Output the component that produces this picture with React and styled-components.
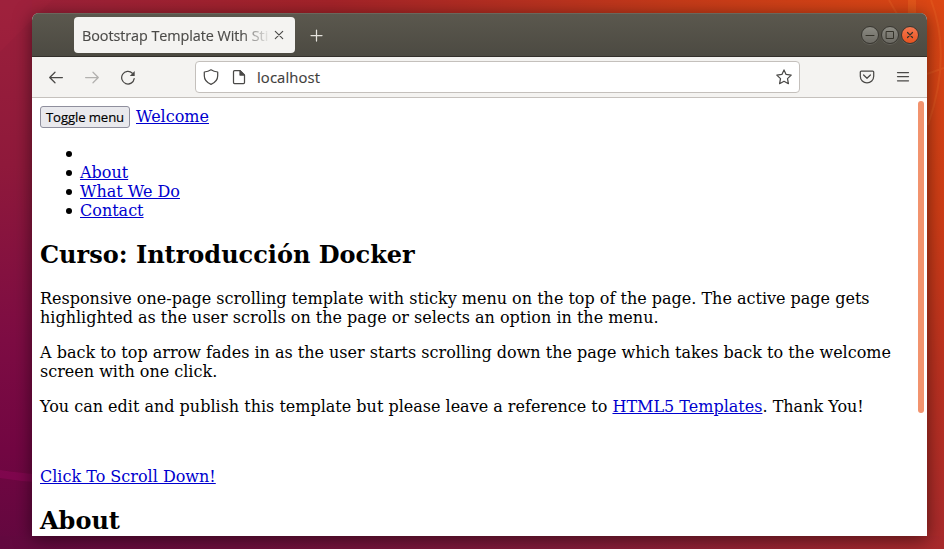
import React from 'react';
import styled, { createGlobalStyle } from 'styled-components';

const GlobalStyle = createGlobalStyle`
  * { box-sizing: border-box; }
  body { margin: 0; overflow: hidden; }
`;

const Desktop = styled.main`
  position: relative;
  width: 944px;
  height: 549px;
  padding: 13px 17px 13px 32px;
  overflow: hidden;
  background:
    linear-gradient(90deg, #62083f 0%, #6d0f3d 25%, #831c3a 60%, #a92a2c 100%) 0 100% / 100% 13px no-repeat,
    linear-gradient(180deg, #9b203b 0%, #8f193b 30%, #7d0c43 62%, #720642 82%, #62083f 100%) 0 0 / 32px 100% no-repeat,
    linear-gradient(180deg, #dc4714 0%, #ce3d16 38%, #b93021 70%, #a92a2c 100%) 100% 0 / 17px 100% no-repeat,
    linear-gradient(90deg, #9b203b 0%, #a42329 35%, #c63b19 72%, #dc4714 100%);
`;

const Wallpaper = styled.svg`
  position: absolute;
  inset: 0;
`;

const Window = styled.section`
  position: relative;
  display: flex;
  flex-direction: column;
  width: 895px;
  height: 523px;
  border-radius: 7px 7px 0 0;
  background: #fff;
  box-shadow: 0 3px 18px rgba(0, 0, 0, 0.52);
  overflow: hidden;
`;

const TitleBar = styled.header`
  display: flex;
  align-items: center;
  flex: 0 0 44px;
  padding: 0 8px 0 42px;
  border-bottom: 1px solid #33302b;
  background: linear-gradient(#5b584e, #4c4a42);
  box-shadow: inset 0 1px #6a675c;
`;

const Tab = styled.div`
  display: flex;
  align-items: center;
  width: 221px;
  height: 36px;
  margin-top: 1px;
  padding: 0 10px 0 8px;
  border-radius: 4px;
  background: #f4f3f1;
`;

const TabTitle = styled.span`
  flex: 0 0 189px;
  overflow: hidden;
  padding-top: 2px;
  white-space: nowrap;
  font: 14.4px/22px "Open Sans", "Noto Sans", sans-serif;
  letter-spacing: -0.07px;
  color: #4b4a48;
  -webkit-text-stroke: 0.15px currentColor;
  mask-image: linear-gradient(90deg, #000 160px, rgba(0, 0, 0, 0.5) 172px, transparent 189px);
`;

const IconSlot = styled.span`
  display: flex;
  flex: 0 0 16px;
  justify-content: center;
  align-items: center;
  margin-left: ${({ $gap = 0 }) => $gap}px;
  color: ${({ $color = '#4a4947' }) => $color};
`;

const Icon = styled.svg`
  display: block;
  fill: none;
  stroke: currentColor;
  stroke-width: ${({ $weight = 1.25 }) => $weight};
  stroke-linecap: round;
  stroke-linejoin: round;
`;

const WindowControls = styled.div`
  display: flex;
  gap: 2px;
  margin-left: auto;
`;

const Control = styled.span`
  display: grid;
  place-items: center;
  width: 18px;
  height: 18px;
  border: 1px solid #393731;
  border-radius: 50%;
  color: #343229;
  background: ${({ $close }) => $close ? 'linear-gradient(#f47850, #e8531f)' : 'linear-gradient(#8b8a82, #6c6a63)'};
  box-shadow: 0 1px rgba(255, 255, 255, 0.1);
`;

const Toolbar = styled.nav`
  display: flex;
  align-items: center;
  flex: 0 0 41px;
  padding: 0 16px;
  border-bottom: 1px solid #c5c1bd;
  background: #f4f3f1;
`;

const AddressBar = styled.div`
  display: flex;
  align-items: center;
  width: 605px;
  height: 32px;
  margin-left: 59px;
  padding: 0 7px;
  border: 1px solid #c4c0bc;
  border-radius: 4px;
  background: #fff;
`;

const Address = styled.span`
  flex: 1;
  margin-left: 10px;
  font: 14.8px/22px "Open Sans", "Noto Sans", sans-serif;
  letter-spacing: 0.12px;
  color: #3f3e3c;
  -webkit-text-stroke: 0.15px currentColor;
`;

const Viewport = styled.div`
  display: flex;
  flex: 1;
  min-height: 0;
  padding: 8px 3px 0 8px;
  overflow: hidden;
`;

const Page = styled.article`
  width: 870px;
  font: 16px/19px "DejaVu Serif", serif;
  color: #000;
`;

const PageBar = styled.div`
  display: flex;
  align-items: flex-end;
  gap: 6px;
  height: 22px;
`;

const MenuButton = styled.button`
  width: 90px;
  height: 22px;
  padding: 0;
  border: 1px solid #8f8f9d;
  border-radius: 3px;
  background: #e9e9ed;
  font: 13.2px/18px "Open Sans", "Noto Sans", sans-serif;
  letter-spacing: -0.12px;
  white-space: nowrap;
  color: #000;
  -webkit-text-stroke: 0.15px currentColor;
`;

const Link = styled.a`
  color: #0000ce;
  text-decoration: underline;
  text-decoration-thickness: 1px;
  text-underline-offset: 1px;
`;

const WelcomeLink = styled(Link)`
  padding-bottom: 2px;
`;

const Menu = styled.ul`
  height: 76px;
  margin: 16px 0 21px;
  padding-left: 40px;
  list-style: none;
`;

const MenuItem = styled.li`
  display: flex;
  align-items: center;
  height: 19px;

  &::before {
    content: "";
    width: 6px;
    height: 6px;
    margin: 1px 8px 0 -14px;
    border-radius: 50%;
    background: #000;
  }
`;

const Heading = styled.h2`
  margin: 0;
  font-size: 24px;
  line-height: 28px;
`;

const Paragraph = styled.p`
  margin: ${({ $top = 16 }) => $top}px 0 0;
`;

const ScrollLine = styled.div`
  margin: 51px 0 21px;
`;

const ScrollThumb = styled.div`
  width: 6px;
  height: 312px;
  margin: -5px 0 0 auto;
  border-radius: 3px;
  background: #f2936e;
`;

const menuLinks = ['', 'About', 'What We Do', 'Contact'];

export default function App() {
  return (
    <>
      <GlobalStyle />
      <Desktop>
        <Wallpaper width="944" height="549" aria-hidden="true">
          <path d="M0 0H52L0 52Z" fill="#b42940" opacity=".15" />
          <path d="M0 470Q20 473 36 474V482Q18 481 0 478Z" fill="#a00864" opacity=".35" />
          <path d="M908 0H916V14H908Z" fill="#ee6b22" opacity=".4" />
          <path d="M931 0Q952 56 928 125M889 0L897 14M944 68L927 74" fill="none" stroke="#f27a32" strokeWidth="2" opacity=".22" />
        </Wallpaper>
        <Window>
          <TitleBar>
            <Tab>
              <TabTitle>Bootstrap Template With Sti</TabTitle>
              <IconSlot>
                <Icon width="16" height="16" viewBox="0 0 16 16" $weight="1.15"><path d="m4.3 4.3 7.4 7.4m0-7.4-7.4 7.4" /></Icon>
              </IconSlot>
            </Tab>
            <IconSlot $gap={13} $color="#e5e3dd">
              <Icon width="16" height="16" viewBox="0 0 16 16"><path d="M8.5 3v11M3 8.5h11" /></Icon>
            </IconSlot>
            <WindowControls>
              <Control><Icon width="16" height="16" viewBox="0 0 16 16" $weight="1"><path d="M4 8.5h8" /></Icon></Control>
              <Control><Icon width="16" height="16" viewBox="0 0 16 16" $weight="1"><path d="M4.5 4.5h7v7h-7z" /></Icon></Control>
              <Control $close><Icon width="16" height="16" viewBox="0 0 16 16" $weight="1.2"><path d="m5.5 5.5 5 5m0-5-5 5" /></Icon></Control>
            </WindowControls>
          </TitleBar>
          <Toolbar>
            <IconSlot>
              <Icon width="16" height="16" viewBox="0 0 16 16"><path d="M14.4 8.5H1.8M7 3.2 1.7 8.5 7 13.8" /></Icon>
            </IconSlot>
            <IconSlot $gap={20} $color="#b2b1af">
              <Icon width="16" height="16" viewBox="0 0 16 16"><path d="M1.6 8.5h12.6M9 3.2l5.3 5.3L9 13.8" /></Icon>
            </IconSlot>
            <IconSlot $gap={20}>
              <Icon width="16" height="16" viewBox="0 0 16 16"><path d="M14.2 9.6A6.3 6.3 0 1 1 12.4 4.2" /><path d="M14.7 2v5H9.8Z" fill="currentColor" stroke="none" /></Icon>
            </IconSlot>
            <AddressBar>
              <IconSlot>
                <Icon width="16" height="16" viewBox="0 0 16 16"><path d="M8 .8Q10.8 2.7 14.7 3v3.8c0 3.7-2.9 7-6.7 8.5C4.2 13.8 1.3 10.5 1.3 6.8V3Q5.2 2.7 8 .8Z" /></Icon>
              </IconSlot>
              <IconSlot $gap={12}>
                <Icon width="16" height="16" viewBox="0 0 16 16"><path d="M3.5 1.7h5.6l4.4 4.2v7.6q0 1-1 1h-9q-1 0-1-1V2.7q0-1 1-1Z" /><path d="M9 1.8v4.3h4.2Z" fill="currentColor" /></Icon>
              </IconSlot>
              <Address>localhost</Address>
              <IconSlot>
                <Icon width="16" height="16" viewBox="0 0 16 16"><path d="m8 .9 2.1 4.5 5.1.7-3.7 3.5.9 5.1L8 12.3l-4.4 2.4.9-5.1L.8 6.1l5.1-.7Z" /></Icon>
              </IconSlot>
            </AddressBar>
            <IconSlot $gap={59}>
              <Icon width="16" height="16" viewBox="0 0 16 16"><path d="M2.3 2h11.4q1 0 1 1v4.2a6.7 6.7 0 0 1-13.4 0V3q0-1 1-1Z" /><path d="M4.6 6 8 9.3 11.4 6" /></Icon>
            </IconSlot>
            <IconSlot $gap={20}>
              <Icon width="16" height="16" viewBox="0 0 16 16"><path d="M2.5 3.5h11M2.5 7.5h11M2.5 11.8h11" /></Icon>
            </IconSlot>
          </Toolbar>
          <Viewport>
            <Page>
              <PageBar>
                <MenuButton>Toggle menu</MenuButton>
                <WelcomeLink>Welcome</WelcomeLink>
              </PageBar>
              <Menu>
                {menuLinks.map((label) => (
                  <MenuItem key={label}>{label && <Link>{label}</Link>}</MenuItem>
                ))}
              </Menu>
              <Heading>Curso: Introducción Docker</Heading>
              <Paragraph $top={20}>
                Responsive one-page scrolling template with sticky menu on the top of the page. The active page gets highlighted as the user scrolls on the page or selects an option in the menu.
              </Paragraph>
              <Paragraph>
                A back to top arrow fades in as the user starts scrolling down the page which takes back to the welcome screen with one click.
              </Paragraph>
              <Paragraph>
                You can edit and publish this template but please leave a reference to <Link>HTML5 Templates</Link>. Thank You!
              </Paragraph>
              <ScrollLine><Link>Click To Scroll Down!</Link></ScrollLine>
              <Heading>About</Heading>
            </Page>
            <ScrollThumb />
          </Viewport>
        </Window>
      </Desktop>
    </>
  );
}
